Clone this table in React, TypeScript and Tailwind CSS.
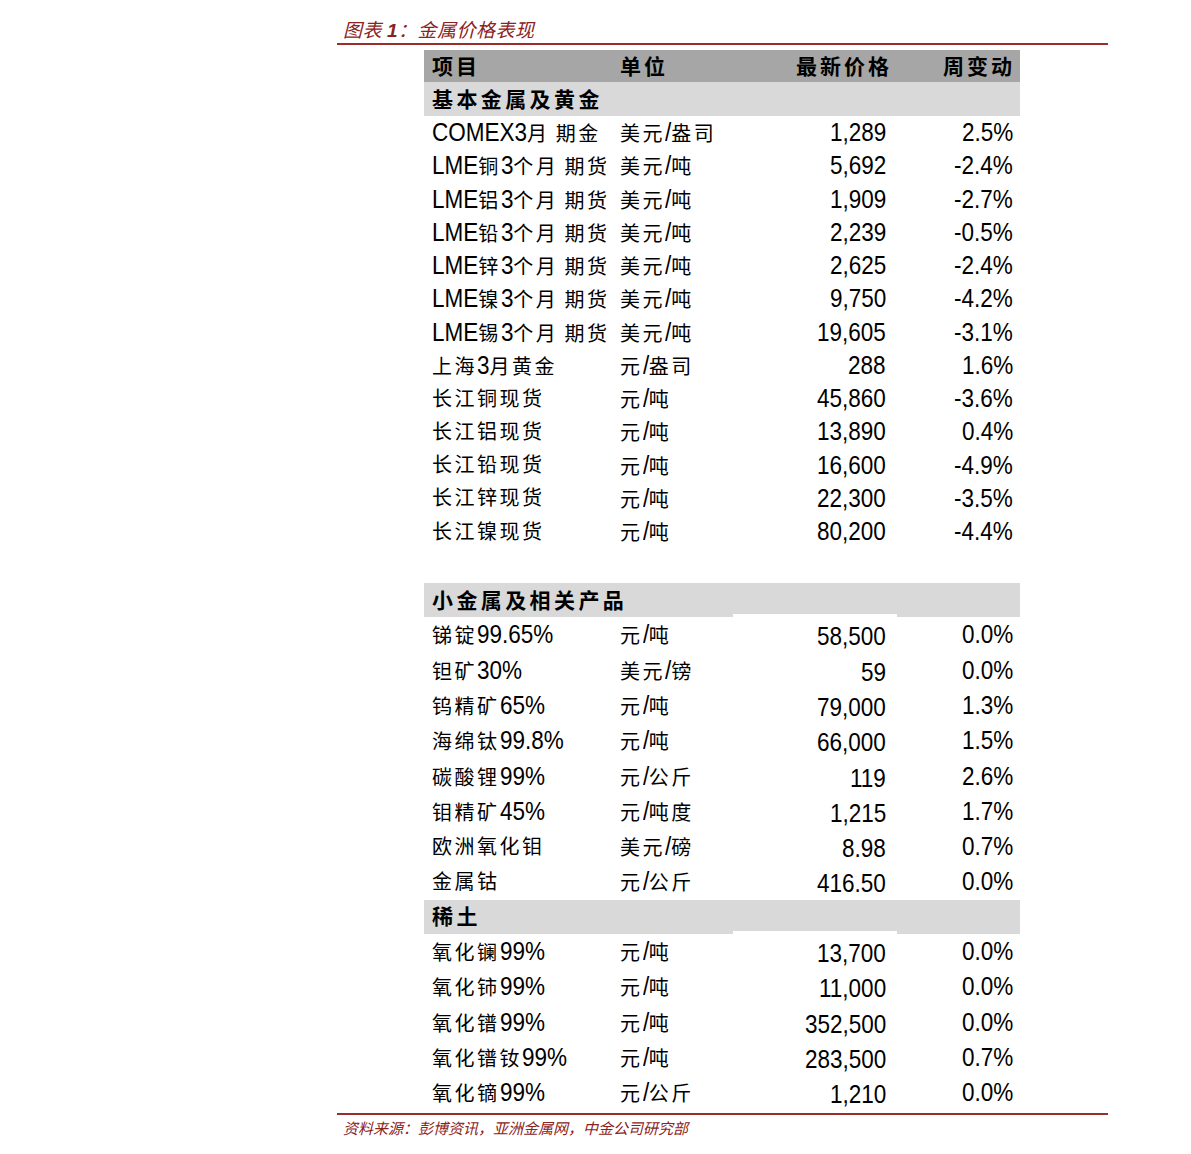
import React, { useLayoutEffect, useRef, useState } from "react";

type Row = [string, string, string, string];

const base: Row[] = [
  ["COMEX3月 期金", "美元/盎司", "1,289", "2.5%"],
  ["LME铜3个月 期货", "美元/吨", "5,692", "-2.4%"],
  ["LME铝3个月 期货", "美元/吨", "1,909", "-2.7%"],
  ["LME铅3个月 期货", "美元/吨", "2,239", "-0.5%"],
  ["LME锌3个月 期货", "美元/吨", "2,625", "-2.4%"],
  ["LME镍3个月 期货", "美元/吨", "9,750", "-4.2%"],
  ["LME锡3个月 期货", "美元/吨", "19,605", "-3.1%"],
  ["上海3月黄金", "元/盎司", "288", "1.6%"],
  ["长江铜现货", "元/吨", "45,860", "-3.6%"],
  ["长江铝现货", "元/吨", "13,890", "0.4%"],
  ["长江铅现货", "元/吨", "16,600", "-4.9%"],
  ["长江锌现货", "元/吨", "22,300", "-3.5%"],
  ["长江镍现货", "元/吨", "80,200", "-4.4%"],
];

const minor: Row[] = [
  ["锑锭99.65%", "元/吨", "58,500", "0.0%"],
  ["钽矿30%", "美元/镑", "59", "0.0%"],
  ["钨精矿65%", "元/吨", "79,000", "1.3%"],
  ["海绵钛99.8%", "元/吨", "66,000", "1.5%"],
  ["碳酸锂99%", "元/公斤", "119", "2.6%"],
  ["钼精矿45%", "元/吨度", "1,215", "1.7%"],
  ["欧洲氧化钼", "美元/磅", "8.98", "0.7%"],
  ["金属钴", "元/公斤", "416.50", "0.0%"],
];

const rare: Row[] = [
  ["氧化镧99%", "元/吨", "13,700", "0.0%"],
  ["氧化铈99%", "元/吨", "11,000", "0.0%"],
  ["氧化镨99%", "元/吨", "352,500", "0.0%"],
  ["氧化镨钕99%", "元/吨", "283,500", "0.7%"],
  ["氧化镝99%", "元/公斤", "1,210", "0.0%"],
];

const cjk = /[\u3000-\u9fff\uff00-\uffef]/;

// no narrow face installed: squeeze Liberation Sans and give back the lost width
function N({ s }: { s: string }) {
  const ref = useRef<HTMLSpanElement>(null);
  const [mr, setMr] = useState(0);
  useLayoutEffect(() => {
    const fit = () => ref.current && setMr(-ref.current.offsetWidth * 0.1);
    fit();
    document.fonts?.ready.then(fit);
  }, [s]);
  return (
    <span
      ref={ref}
      className="inline-block origin-left scale-x-[0.9] text-[25px] whitespace-pre"
      style={{ marginRight: mr }}
    >
      {s}
    </span>
  );
}

// split mixed strings so CJK runs get their own size and spacing
function T({ s }: { s: string }) {
  const parts = s.match(/[\u3000-\u9fff\uff00-\uffef]+|[^\u3000-\u9fff\uff00-\uffef]+/g) ?? [];
  return (
    <>
      {parts.map((p, i) =>
        cjk.test(p) ? (
          <span key={i} className="text-[20px] tracking-[2.5px]">{p}</span>
        ) : (
          <N key={i} s={p} />
        )
      )}
    </>
  );
}

const cols = "grid grid-cols-[191px_118px_164px_123px]";

function DataRow({ r, h, shift }: { r: Row; h: string; shift?: boolean }) {
  return (
    <div className={`${cols} ${h} items-center leading-none`}>
      <div className="pl-2 whitespace-nowrap"><T s={r[0]} /></div>
      <div className="pl-[5px] whitespace-nowrap"><T s={r[1]} /></div>
      <div className={`pr-[11px] text-right ${shift ? "pt-[4px]" : ""}`}><N s={r[2]} /></div>
      <div className="pr-[7px] text-right"><N s={r[3]} /></div>
    </div>
  );
}

function Section({ title, notch }: { title: string; notch?: boolean }) {
  return (
    <div className={`${cols} h-[34px] bg-[#d9d9d9]`}>
      <div className="col-span-2 flex items-center pl-2 text-[21px] font-bold tracking-[3.4px] leading-none whitespace-nowrap">
        {title}
      </div>
      <div className="flex flex-col justify-end">
        {notch && <div className="h-[3px] bg-white" />}
      </div>
      <div />
    </div>
  );
}

export default function App() {
  return (
    <div className="min-h-[1154px] bg-white text-black font-['Liberation_Sans','Noto_Sans_CJK_SC',sans-serif]">
      <div className="ml-[337px] w-[771px]">
        <div className="h-[43px] flex items-end pb-[3px] pl-[6px] text-[19px] italic text-[#8b2323] leading-none tracking-[0.5px] whitespace-nowrap">
          图表<span className="ml-[5px] font-bold">1</span>：金属价格表现
        </div>
        <div className="h-[2px] bg-[#9b2d2d]" />

        <div className="ml-[87px] mt-[5px] w-[596px]">
          <div className={`${cols} h-[32px] bg-[#a6a6a6] items-center text-[21px] font-bold tracking-[3px] leading-none`}>
            <div className="pl-2">项目</div>
            <div className="pl-[5px]">单位</div>
            <div className="pr-[5px] text-right">最新价格</div>
            <div className="pr-[5px] text-right">周变动</div>
          </div>

          <Section title="基本金属及黄金" />
          {base.map((r) => (
            <DataRow key={r[0]} r={r} h="h-[33.25px]" />
          ))}

          <div className="h-[35px]" />

          <Section title="小金属及相关产品" notch />
          {minor.map((r) => (
            <DataRow key={r[0]} r={r} h="h-[35.3px]" shift />
          ))}

          <Section title="稀土" notch />
          {rare.map((r) => (
            <DataRow key={r[0]} r={r} h="h-[35.4px]" shift />
          ))}
        </div>

        <div className="mt-[2px] h-[2px] bg-[#9b2d2d]" />
        <div className="pt-[6px] pl-[6px] text-[15px] italic text-[#8b2323] leading-none whitespace-nowrap">
          资料来源：彭博资讯，亚洲金属网，中金公司研究部
        </div>
      </div>
    </div>
  );
}
